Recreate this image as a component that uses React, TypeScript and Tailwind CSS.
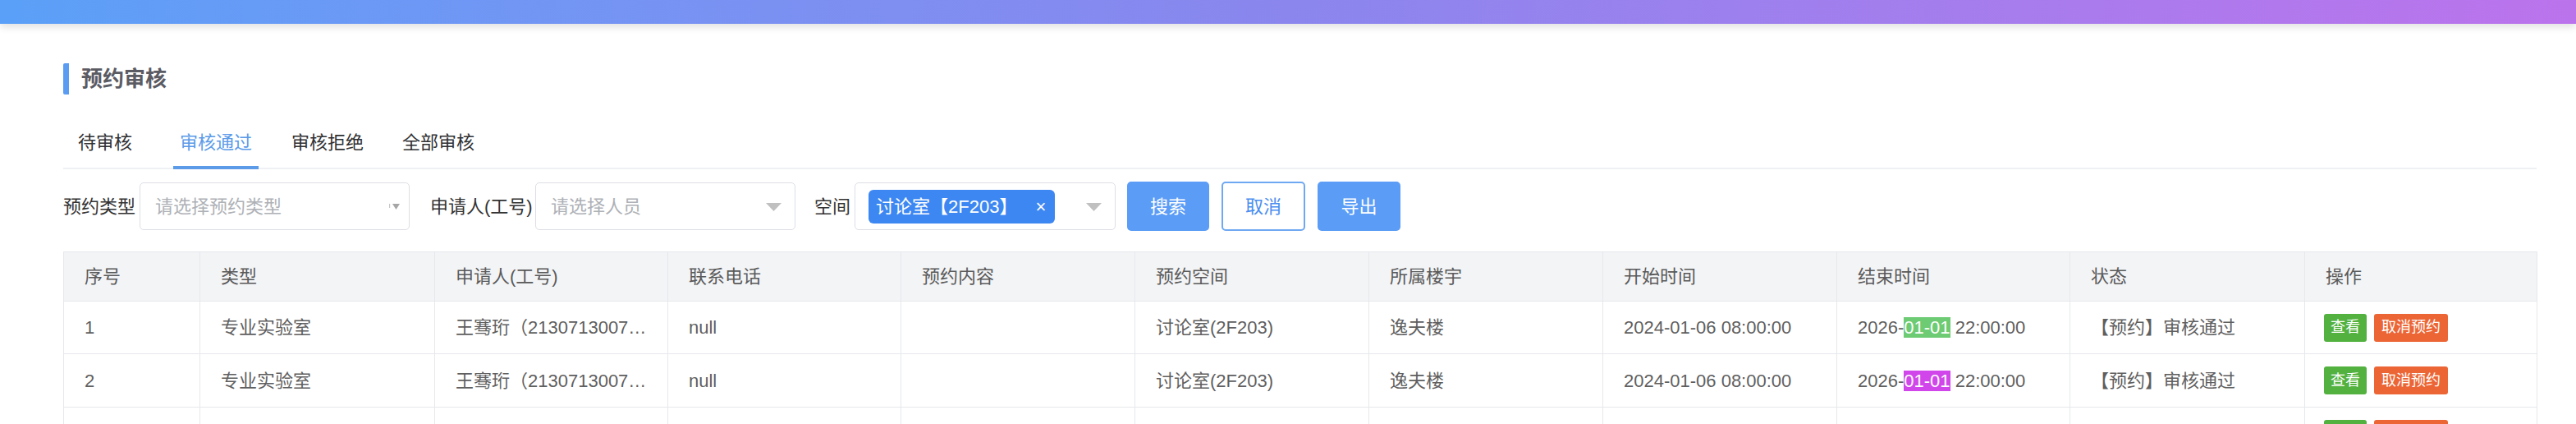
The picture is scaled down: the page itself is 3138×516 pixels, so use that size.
import React from 'react';

const FONT = '"Liberation Sans", "Noto Sans CJK SC", sans-serif';

const columns = [
  { title: '序号', w: 166 },
  { title: '类型', w: 286 },
  { title: '申请人(工号)', w: 284 },
  { title: '联系电话', w: 284 },
  { title: '预约内容', w: 285 },
  { title: '预约空间', w: 285 },
  { title: '所属楼宇', w: 285 },
  { title: '开始时间', w: 285 },
  { title: '结束时间', w: 284 },
  { title: '状态', w: 286 },
  { title: '操作', w: 283 },
];

const rows = [
  { id: 1, mark: 'bg-[#6dcb73]', h: 'h-[64px]' },
  { id: 2, mark: 'bg-[#d046ea]', h: 'h-[65px]' },
  { id: 3, mark: 'bg-[#6dcb73]', h: 'h-[65px]' },
];

const tabs = [
  { label: '待审核', active: false, cls: 'ml-[10px]' },
  { label: '审核通过', active: true, cls: 'ml-[42px]' },
  { label: '审核拒绝', active: false, cls: 'ml-[32px]' },
  { label: '全部审核', active: false, cls: 'ml-[31px]' },
];

// little grey caret used by the selects
function Caret({ small }: { small?: boolean }) {
  if (small) {
    return (
      <svg width="14" height="10" viewBox="0 0 14 10" className="absolute right-[10px] top-[24px]">
        <rect x="0" y="1" width="1.2" height="5" fill="#c8c8c8" />
        <path d="M4 1 L13 1 L8.5 8 Z" fill="#a6a6a6" />
      </svg>
    );
  }
  return (
    <svg width="19" height="10" viewBox="0 0 19 10" className="absolute right-[16px] top-[24px]">
      <path d="M0 0 L19 0 L9.5 10 Z" fill="#c0c0c0" />
    </svg>
  );
}

export default function App() {
  return (
    <div className="w-[3138px] h-[516px] overflow-hidden bg-white" style={{ fontFamily: FONT }}>
      {/* top gradient bar */}
      <div className="relative z-10 h-[29px] bg-gradient-to-r from-[#5aa0f8] via-[#8a86ee] to-[#bb73ec] shadow-[0_4px_10px_rgba(0,0,0,0.12)]" />

      <div className="pl-[77px] pr-[48px]">
        {/* title */}
        <div className="mt-[48px] flex items-center h-[38px]">
          <div className="w-[7px] h-[38px] bg-[#5a9cf2] rounded-l-[2px]" />
          <div className="ml-[15px] text-[26px] font-bold text-[#5b5b63] leading-none">预约审核</div>
        </div>

        {/* tabs */}
        <div className="mt-[29px] flex border-b-2 border-[#eef0f3]">
          {tabs.map(t => (
            <div
              key={t.label}
              className={`${t.cls} h-[62px] -mb-[2px] px-[8px] flex items-center border-b-[4px] text-[22px] ${
                t.active ? 'border-[#5b9be8] text-[#5b9be8]' : 'border-transparent text-[#303133]'
              }`}
            >
              {t.label}
            </div>
          ))}
        </div>

        {/* filters */}
        <div className="mt-[15px] flex items-center h-[60px] text-[22px]">
          <div className="w-[93px] text-[#333]">预约类型</div>
          <div className="relative w-[329px] h-[58px] border border-[#dcdfe6] rounded-[5px] flex items-center pl-[18px] text-[#aeb1b6]">
            请选择预约类型
            <Caret small />
          </div>

          <div className="ml-[25px] w-[128px] text-[#333]">申请人(工号)</div>
          <div className="relative w-[317px] h-[58px] border border-[#dcdfe6] rounded-[5px] flex items-center pl-[18px] text-[#aeb1b6]">
            请选择人员
            <Caret />
          </div>

          <div className="ml-[23px] w-[49px] text-[#333]">空间</div>
          <div className="relative w-[318px] h-[58px] border border-[#dcdfe6] rounded-[5px] flex items-center pl-[16px]">
            <div className="h-[41px] flex items-center rounded-[6px] bg-[#3d87f2] text-white pl-[9px] pr-[11px]">
              <span>讨论室【2F203】</span>
              <span className="ml-[22px] text-[22px]">×</span>
            </div>
            <Caret />
          </div>

          <button className="ml-[14px] w-[100px] h-[60px] rounded-[5px] bg-[#5a9cf6] text-white">搜索</button>
          <button className="ml-[15px] w-[102px] h-[60px] rounded-[5px] border-2 border-[#6ea8f2] bg-white text-[#4a8ef0]">取消</button>
          <button className="ml-[15px] w-[101px] h-[60px] rounded-[5px] bg-[#5a9cf6] text-white">导出</button>
        </div>

        {/* table */}
        <table className="mt-[25px] table-fixed border-collapse w-[3013px] text-[22px] text-[#5f5f5f]">
          <colgroup>
            {columns.map(c => (
              <col key={c.title} style={{ width: c.w }} />
            ))}
          </colgroup>
          <thead>
            <tr className="h-[60px] bg-[#f3f4f6]">
              {columns.map(c => (
                <th key={c.title} className="border border-[#e6e8ec] pl-[25px] text-left font-normal text-[#5a5a5a]">
                  {c.title}
                </th>
              ))}
            </tr>
          </thead>
          <tbody>
            {rows.map(r => (
              <tr key={r.id} className={r.h}>
                <td className="border border-[#e6e8ec] pl-[25px]">{r.id}</td>
                <td className="border border-[#e6e8ec] pl-[25px]">专业实验室</td>
                <td className="border border-[#e6e8ec] pl-[25px] pr-[25px] whitespace-nowrap overflow-hidden text-ellipsis">
                  王骞珩（2130713007031）
                </td>
                <td className="border border-[#e6e8ec] pl-[25px]">null</td>
                <td className="border border-[#e6e8ec] pl-[25px]"></td>
                <td className="border border-[#e6e8ec] pl-[25px]">讨论室(2F203)</td>
                <td className="border border-[#e6e8ec] pl-[25px]">逸夫楼</td>
                <td className="border border-[#e6e8ec] pl-[25px] whitespace-nowrap">2024-01-06 08:00:00</td>
                <td className="border border-[#e6e8ec] pl-[25px] whitespace-nowrap">
                  2026-<span className={`${r.mark} text-white`}>01-01</span> 22:00:00
                </td>
                <td className="border border-[#e6e8ec] pl-[25px] whitespace-nowrap">【预约】审核通过</td>
                <td className="border border-[#e6e8ec] pl-[23px] whitespace-nowrap">
                  <div className="flex items-center gap-[9px]">
                    <span className="h-[34px] px-[8px] flex items-center rounded-[3px] bg-[#52b13f] text-white text-[18px]">查看</span>
                    <span className="h-[34px] px-[9px] flex items-center rounded-[3px] bg-[#ec6535] text-white text-[18px]">取消预约</span>
                  </div>
                </td>
              </tr>
            ))}
          </tbody>
        </table>
      </div>
    </div>
  );
}
